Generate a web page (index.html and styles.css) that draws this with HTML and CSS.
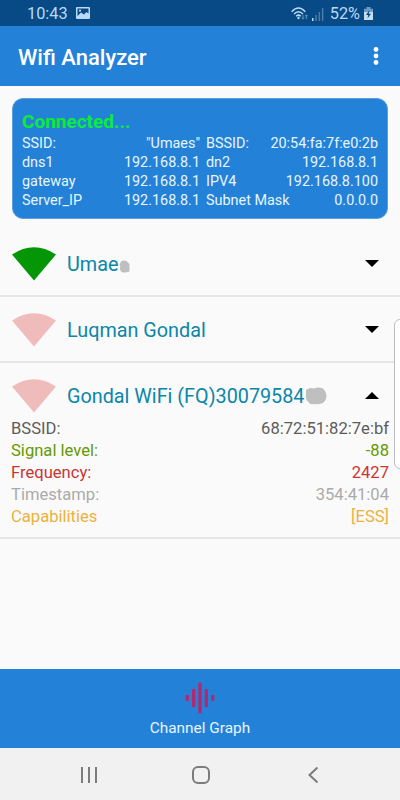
FILE: index.html
```
<!doctype html>
<html lang="en">

    <head>
        <meta charset="UTF-8" />
        <meta name="viewport" content="width=device-width, initial-scale=1" />
        <title>Wifi Analyzer</title>
        <link rel="stylesheet" href="styles.css">
    </head>

    <body>
        <div class="status">
            <span class="time">10:43</span>
            <svg class="pic" width="14" height="13" viewBox="0 0 14 13">
                <path d="M1 0h12q1 0 1 1v10q0 1-1 1H1q-1 0-1-1V1q0-1 1-1z" fill="#b9d9f6" />
                <path d="M1.500 1.500h11v5L10.500 5 8 7.500 5 5.500 1.500 9z" fill="#074a86" />
                <circle cx="4" cy="3.700" r="1.100" fill="#b9d9f6" />
            </svg>
            <svg class="wifi" width="18" height="14" viewBox="0 0 18 14">
                <g fill="none" stroke="#b9d9f6" stroke-width="1.500">
                    <path d="M.7 4.700Q7.500-2.500 14.300 4.700" />
                    <path d="M3 7Q7.500 2.300 12 7" />
                    <path d="M5.200 9.200Q7.500 7 9.800 9.200" />
                </g>
                <circle cx="7.500" cy="11" r="1.200" fill="#b9d9f6" />
                <path d="M12 8v4M10.700 10.800L12 12.200 13.300 10.800M15.400 12V8M14.100 9.200L15.400 7.800 16.700 9.200" fill="none" stroke="#6794bd" stroke-width="1" />
            </svg>
            <svg class="signal" width="12" height="13" viewBox="0 0 12 13">
                <path d="M0 10h1.500v3H0z" fill="#b9d9f6" />
                <path d="M3.300 7h1.500v6H3.300zM6.600 4h1.500v9H6.600zM9.900 0h1.500v13H9.900z" fill="#4a7dab" />
            </svg>
            <span class="percent">52%</span>
            <svg class="battery" width="9" height="14" viewBox="0 0 9 14">
                <path d="M2.500 0h4v1.800H9V13H0V1.800h2.500z" fill="#6f9bc2" />
                <path d="M0 5h9v8H0z" fill="#c6dcef" />
                <path d="M5.500 3L2 8h2.200L3.500 11.500 7 6.800H4.800z" fill="#074a86" />
            </svg>
        </div>

        <div class="header">
            <h1>Wifi Analyzer</h1>
            <svg class="more" width="6" height="20" viewBox="0 0 6 20">
                <g fill="#fff">
                    <circle cx="3" cy="3.500" r="2.400" />
                    <circle cx="3" cy="10" r="2.400" />
                    <circle cx="3" cy="16.500" r="2.400" />
                </g>
            </svg>
        </div>

        <div class="main">
            <div class="card">
                <h2>Connected...</h2>
                <div class="info">
                    <div class="cell"><span>SSID:</span><span>"Umaes"</span></div>
                    <div class="cell"><span>BSSID:</span><span>20:54:fa:7f:e0:2b</span></div>
                    <div class="cell"><span>dns1</span><span>192.168.8.1</span></div>
                    <div class="cell"><span>dn2</span><span>192.168.8.1</span></div>
                    <div class="cell"><span>gateway</span><span>192.168.8.1</span></div>
                    <div class="cell"><span>IPV4</span><span>192.168.8.100</span></div>
                    <div class="cell"><span>Server_IP</span><span>192.168.8.1</span></div>
                    <div class="cell"><span>Subnet Mask</span><span>0.0.0.0</span></div>
                </div>
            </div>

            <div class="item">
                <div class="row">
                    <svg class="fan strong" width="44" height="34" viewBox="0 0 44 34">
                        <path d="M0 7.500Q22-7 44 7.500L22 33.500z" />
                    </svg>
                    <span class="name">Umae</span>
                    <svg class="blot" width="11" height="13" viewBox="0 0 11 13">
                        <path d="M2 1.500Q5-.5 8 1.500L10.500 4V11.500Q5 13.500 2 11.500 0 8 1.500 6.500L.5 5z" />
                    </svg>
                    <svg class="arrow" width="14" height="7" viewBox="0 0 14 7">
                        <path d="M0 0h14L7 7z" />
                    </svg>
                </div>
            </div>

            <div class="item">
                <div class="row">
                    <svg class="fan weak" width="44" height="34" viewBox="0 0 44 34">
                        <path d="M0 7.500Q22-7 44 7.500L22 33.500z" />
                    </svg>
                    <span class="name">Luqman Gondal</span>
                    <svg class="arrow" width="14" height="7" viewBox="0 0 14 7">
                        <path d="M0 0h14L7 7z" />
                    </svg>
                </div>
            </div>

            <div class="item open">
                <div class="row">
                    <svg class="fan weak" width="44" height="34" viewBox="0 0 44 34">
                        <path d="M0 7.500Q22-7 44 7.500L22 33.500z" />
                    </svg>
                    <span class="name">Gondal WiFi (FQ)30079584</span>
                    <svg class="blot wide" width="22" height="18" viewBox="0 0 22 18">
                        <path d="M1 3Q5 0 9 1.500 13-.5 18 1.500 21 4 21.500 8 21.500 13 18 16 13 18 9 17 5 18 3.500 15 0 12 1 8z" />
                    </svg>
                    <svg class="arrow" width="14" height="7" viewBox="0 0 14 7">
                        <path d="M0 7h14L7 0z" />
                    </svg>
                </div>
                <div class="detail">
                    <div class="line bssid"><span>BSSID:</span><span>68:72:51:82:7e:bf</span></div>
                    <div class="line level"><span>Signal level:</span><span>-88</span></div>
                    <div class="line freq"><span>Frequency:</span><span>2427</span></div>
                    <div class="line stamp"><span>Timestamp:</span><span>354:41:04</span></div>
                    <div class="line caps"><span>Capabilities</span><span>[ESS]</span></div>
                </div>
            </div>
        </div>

        <div class="tab">
            <svg width="30" height="32" viewBox="0 0 30 32">
                <path d="M.7 13h3.300v6H.7zM7 7h3.300v18H7zM13.300.7h3.400v30.600h-3.400zM19.700 7H23v18h-3.300zM26 13h3.300v6H26z" fill="#b02a72" />
            </svg>
            <span>Channel Graph</span>
        </div>

        <div class="nav">
            <svg width="18" height="18" viewBox="0 0 18 18">
                <path d="M2 1v16M9 1v16M16 1v16" />
            </svg>
            <svg width="18" height="18" viewBox="0 0 18 18">
                <rect x="1" y="1" width="16" height="16" rx="5" />
            </svg>
            <svg width="18" height="18" viewBox="0 0 18 18">
                <path d="M13.500 1.500L5.500 9l8 7.500" />
            </svg>
        </div>

        <!-- edge panel handle -->
        <div class="handle"></div>
    </body>

</html>
```
FILE: styles.css
```
* {
    padding: 0px;
    margin: 0px;
    box-sizing: border-box;
}

body {
    display: flex;
    flex-direction: column;
    width: 400px;
    height: 800px;
    overflow: hidden;
    position: relative;
    background: #fafafa;
    font-family: Roboto, "Liberation Sans", sans-serif;
}

svg {
    display: block;
    flex: none;
}

.status {
    display: flex;
    align-items: center;
    height: 26px;
    padding: 1px 27px 0px;
    background: #074a86;
    color: #b9d9f6;
    font-size: 16.300px;
}

.status .pic {
    margin-left: 8px;
}

.status .wifi {
    margin-left: auto;
}

.status .signal {
    margin: 1px 6px 0px 3px;
}

.status .battery {
    margin-left: 4px;
}

.header {
    display: flex;
    align-items: center;
    justify-content: space-between;
    height: 60px;
    padding: 2px 21px 0px 18px;
    background: #2481d8;
    color: #fff;
}

.header h1 {
    font-size: 22px;
    font-weight: 500;
}

.header .more {
    margin-bottom: 3px;
}

.main {
    flex: 1;
    padding-top: 12px;
}

.card {
    height: 121px;
    margin: 0px 12px 12px;
    padding: 11px 9px 0px;
    border: 1px solid #5a9fe0;
    border-radius: 11px;
    background: #2481d8;
}

.card h2 {
    color: #0cec38;
    font-size: 19px;
    font-weight: 700;
    line-height: 24px;
}

.info {
    display: grid;
    grid-template-columns: 178px 172px;
    column-gap: 6px;
    color: #e6f6ff;
    font-size: 14.400px;
    line-height: 19px;
}

.cell,
.line {
    display: flex;
    justify-content: space-between;
}

.item {
    border-bottom: 2px solid #e6e6e6;
}

.row {
    display: flex;
    align-items: center;
    height: 64px;
    padding: 2px 21px 0px 12px;
}

.open .row {
    height: 54px;
    padding-top: 12px;
}

.fan {
    margin: 0px 11px 1px 0px;
}

.fan.strong {
    fill: #049606;
}

.fan.weak {
    fill: #efbcbb;
}

.name {
    color: #0a86a8;
    font-size: 19.800px;
}

.blot {
    margin: 4px 0px 0px 1px;
    fill: #bfbfbf;
}

.blot.wide {
    margin-top: 0px;
}

.arrow {
    margin: 0px 0px 2px auto;
}

.detail {
    padding: 1px 11px 9px;
    font-size: 16.600px;
    line-height: 22px;
}

.bssid {
    color: #5c5c5c;
}

.level {
    color: #669900;
}

.freq {
    color: #cc3333;
}

.stamp {
    color: #aaaaaa;
}

.caps {
    color: #ecb13c;
}

.tab {
    display: flex;
    flex-direction: column;
    align-items: center;
    height: 79px;
    padding-top: 13px;
    background: #2481d8;
    color: #e6f6ff;
    font-size: 15.400px;
    line-height: 28px;
}

.nav {
    display: flex;
    align-items: center;
    justify-content: space-between;
    height: 52px;
    padding: 2px 78px 0px 80px;
    background: #f1f1f1;
}

.nav svg {
    fill: none;
    stroke: #7c7c7c;
    stroke-width: 2px;
}

.handle {
    position: absolute;
    top: 319px;
    right: -6px;
    width: 12px;
    height: 150px;
    border: 1px solid #bdbdbd;
    border-radius: 6px;
    background: #fff;
}
```
